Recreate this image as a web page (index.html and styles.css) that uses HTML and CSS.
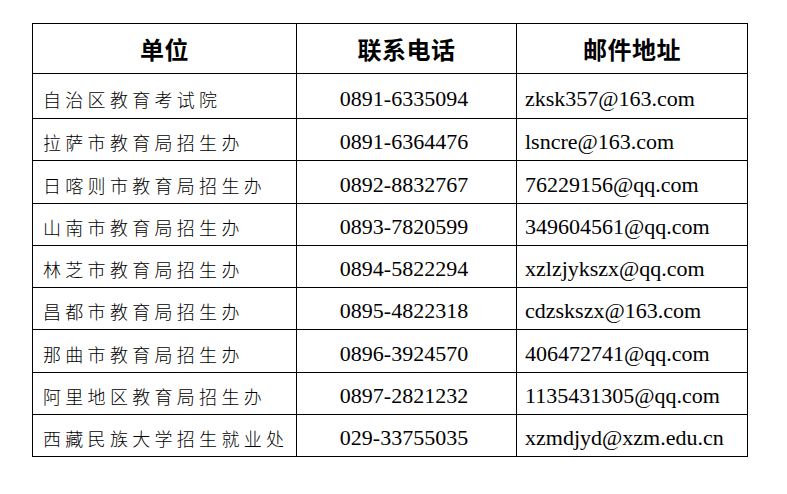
FILE: index.html
```html
<!DOCTYPE html>
<html lang="zh-CN">
<head>
<meta charset="utf-8">
<title>招生联系方式</title>
<link rel="stylesheet" href="styles.css">
</head>
<body>
<table class="contacts">
  <colgroup>
    <col class="c-unit">
    <col class="c-phone">
    <col class="c-mail">
  </colgroup>
  <thead>
    <tr class="head-row">
      <th>单位</th>
      <th>联系电话</th>
      <th>邮件地址</th>
    </tr>
  </thead>
  <tbody>
    <tr class="first-row">
      <td class="unit">自治区教育考试院</td>
      <td class="phone">0891-6335094</td>
      <td class="mail">zksk357@163.com</td>
    </tr>
    <tr>
      <td class="unit">拉萨市教育局招生办</td>
      <td class="phone">0891-6364476</td>
      <td class="mail">lsncre@163.com</td>
    </tr>
    <tr>
      <td class="unit">日喀则市教育局招生办</td>
      <td class="phone">0892-8832767</td>
      <td class="mail">76229156@qq.com</td>
    </tr>
    <tr>
      <td class="unit">山南市教育局招生办</td>
      <td class="phone">0893-7820599</td>
      <td class="mail">349604561@qq.com</td>
    </tr>
    <tr>
      <td class="unit">林芝市教育局招生办</td>
      <td class="phone">0894-5822294</td>
      <td class="mail">xzlzjykszx@qq.com</td>
    </tr>
    <tr>
      <td class="unit">昌都市教育局招生办</td>
      <td class="phone">0895-4822318</td>
      <td class="mail">cdzskszx@163.com</td>
    </tr>
    <tr>
      <td class="unit">那曲市教育局招生办</td>
      <td class="phone">0896-3924570</td>
      <td class="mail">406472741@qq.com</td>
    </tr>
    <tr>
      <td class="unit">阿里地区教育局招生办</td>
      <td class="phone">0897-2821232</td>
      <td class="mail">1135431305@qq.com</td>
    </tr>
    <tr>
      <td class="unit">西藏民族大学招生就业处</td>
      <td class="phone">029-33755035</td>
      <td class="mail">xzmdjyd@xzm.edu.cn</td>
    </tr>
  </tbody>
</table>
</body>
</html>
```
FILE: styles.css
```css
html, body {
  margin: 0;
  padding: 0;
  background: #ffffff;
}

body {
  padding: 23px 0 0 32px;
  color: #000000;
  font-family: "Liberation Serif", "Noto Sans CJK SC", serif;
}

.contacts {
  border-collapse: collapse;
  table-layout: fixed;
  width: 715px;
}

.c-unit { width: 264px; }
.c-phone { width: 220px; }
.c-mail { width: 231px; }

.contacts th,
.contacts td {
  border: 1px solid #000000;
  padding: 0;
  white-space: nowrap;
  overflow: hidden;
}

.head-row { height: 50px; }

.contacts th {
  font-family: "Noto Sans CJK SC", sans-serif;
  font-weight: 700;
  font-size: 24px;
  line-height: 30px;
  letter-spacing: 0.5px;
  text-align: center;
  vertical-align: middle;
}

.contacts tbody tr { height: 42.3px; }
.contacts tbody tr.first-row { height: 45px; }

.contacts td {
  vertical-align: bottom;
  line-height: 24px;
  padding-bottom: 6px;
}

.contacts tr.first-row td { padding-bottom: 7.5px; }

.contacts .unit {
  font-family: "Noto Sans CJK SC", sans-serif;
  font-weight: 300;
  font-size: 18px;
  letter-spacing: 4.3px;
  padding-left: 10px;
}

.contacts .phone {
  font-family: "Liberation Serif", serif;
  font-size: 22px;
  text-align: center;
  padding-right: 5px;
}

.contacts .mail {
  font-family: "Liberation Serif", serif;
  font-size: 22px;
  padding-left: 8px;
}
```
